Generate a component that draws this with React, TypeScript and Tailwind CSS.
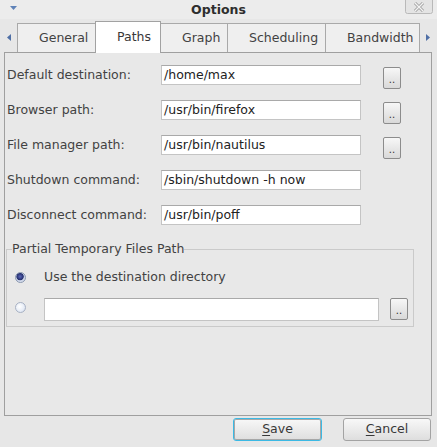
import React from "react";

const tabs = [
  { label: "General", width: "w-[79px]" },
  { label: "Paths", width: "w-[66px]", active: true },
  { label: "Graph", width: "w-[68px]" },
  { label: "Scheduling", width: "w-[99px]" },
  { label: "Bandwidth", width: "w-[95px]" },
];

const pathRows = [
  { label: "Default destination:", value: "/home/max", browse: true },
  { label: "Browser path:", value: "/usr/bin/firefox", browse: true },
  { label: "File manager path:", value: "/usr/bin/nautilus", browse: true },
  { label: "Shutdown command:", value: "/sbin/shutdown -h now", browse: false },
  { label: "Disconnect command:", value: "/usr/bin/poff", browse: false },
];

function BrowseButton({ className = "" }: { className?: string }) {
  return (
    <button
      className={`flex h-[22px] w-[18px] items-end justify-center rounded-[2px] border border-[#8c8c8c] bg-gradient-to-b from-[#f7f7f7] to-[#d9d9d9] pb-[3px] text-[10px] leading-[10px] text-[#333] ${className}`}
    >
      ..
    </button>
  );
}

function TextInput({ value, className = "" }: { value: string; className?: string }) {
  return (
    <div
      className={`flex items-center border border-[#c4c4c4] border-t-[#a9a9a9] bg-white pl-[2px] text-[#222] ${className}`}
    >
      {value}
    </div>
  );
}

export default function App() {
  return (
    <div
      className="relative h-[447px] w-[437px] overflow-hidden bg-[#e7e7e7] text-[12.5px] text-[#424242]"
      style={{ fontFamily: '"DejaVu Sans", "Liberation Sans", sans-serif' }}
    >
      {/* title bar */}
      <div className="grid h-[19px] grid-cols-[32px_1fr_32px] items-center bg-[#ececec]">
        <svg width="8" height="5" viewBox="0 0 8 5" className="ml-[10px] mt-[-2px]">
          <path d="M0 0 H7 L3.5 4 Z" fill="#5f82b8" />
        </svg>
        <div className="text-center text-[12.5px] font-bold leading-[19px] text-[#2e2e2e]">Options</div>
        <div className="flex h-[19px] items-start justify-end pr-[4px]">
          <svg width="28" height="14" viewBox="0 0 28 14">
            <rect x="0.5" y="-2" width="27" height="15.5" rx="2" fill="#e4e4e4" stroke="#b9b9b9" />
            <path d="M10 3 L18 11 M18 3 L10 11" stroke="#9a9a9a" strokeWidth="3" />
            <path d="M10 3 L18 11 M18 3 L10 11" stroke="#f4f4f4" strokeWidth="1.4" />
          </svg>
        </div>
      </div>

      {/* tab strip */}
      <div className="mt-[2px] flex h-[31px] items-end">
        <div className="flex h-[29px] w-[17px] items-center pl-[7px]">
          <svg width="4" height="7" viewBox="0 0 4 7">
            <path d="M4 0 V7 L0 3.5 Z" fill="#4f6fa6" />
          </svg>
        </div>
        {tabs.map((tab, index) =>
          tab.active ? (
            <div
              key={tab.label}
              className={`relative z-10 -mb-px flex h-[32px] items-center border-x border-t border-[#a2a2a2] bg-white pl-[21px] text-[#383838] ${tab.width} ${index > 0 ? "-ml-px" : ""}`}
            >
              {tab.label}
            </div>
          ) : (
            <div
              key={tab.label}
              className={`flex h-[29px] items-center border-x border-t border-[#a9a9a9] bg-[#efefef] pl-[21px] ${tab.width} ${index > 0 ? "-ml-px" : ""}`}
            >
              {tab.label}
            </div>
          )
        )}
        <div className="flex h-[29px] flex-1 items-center pl-[6px]">
          <svg width="4" height="7" viewBox="0 0 4 7">
            <path d="M0 0 V7 L4 3.5 Z" fill="#4f6fa6" />
          </svg>
        </div>
      </div>

      {/* page */}
      <div className="ml-[4px] h-[364px] w-[428px] border border-[#9f9f9f] bg-[#e8e8e8] pt-[12px]">
        {pathRows.map((row) => (
          <div key={row.label} className="flex h-[35px] items-start pl-[2px]">
            <div className="w-[154px] leading-[20px]">{row.label}</div>
            <TextInput value={row.value} className="h-[20px] w-[200px]" />
            {row.browse && <BrowseButton className="ml-[22px] mt-[2px]" />}
          </div>
        ))}

        <fieldset className="ml-[1px] mt-[2px] w-[408px] border border-[#cacaca] pb-[5px] pl-[5px]">
          <legend className="leading-[14px]">Partial Temporary Files Path</legend>
          <div className="mt-[11px] flex h-[20px] items-center">
            <span className="ml-[3px] h-[11px] w-[11px] rounded-full border border-[#8a98b0] bg-[radial-gradient(circle_at_45%_40%,#5a66b8_0%,#26306e_45%,#c9d2e6_55%,#eef2f8_100%)]" />
            <span className="ml-[18px]">Use the destination directory</span>
          </div>
          <div className="mt-[11px] flex items-start">
            <span className="ml-[3px] mt-[4px] h-[11px] w-[11px] rounded-full border border-[#a8b2c4] bg-[radial-gradient(circle_at_40%_40%,#ffffff_0%,#e6ecf6_60%,#c7d2e4_100%)]" />
            <TextInput value="" className="ml-[18px] h-[23px] w-[335px]" />
            <BrowseButton className="ml-[11px]" />
          </div>
        </fieldset>
      </div>

      {/* dialog buttons */}
      <div className="mt-[2px] flex justify-end gap-[21px] pr-[6px]">
        <button className="h-[23px] w-[89px] rounded-[3px] border border-[#3bb9e4] bg-gradient-to-b from-[#f8f8f8] to-[#dedede] text-[#383838] shadow-[inset_0_0_0_1px_#a7a7a7]">
          <span className="underline underline-offset-2">S</span>ave
        </button>
        <button className="h-[23px] w-[88px] rounded-[3px] border border-[#a3a3a3] bg-gradient-to-b from-[#f8f8f8] to-[#dedede] text-[#383838]">
          <span className="underline underline-offset-2">C</span>ancel
        </button>
      </div>
    </div>
  );
}
